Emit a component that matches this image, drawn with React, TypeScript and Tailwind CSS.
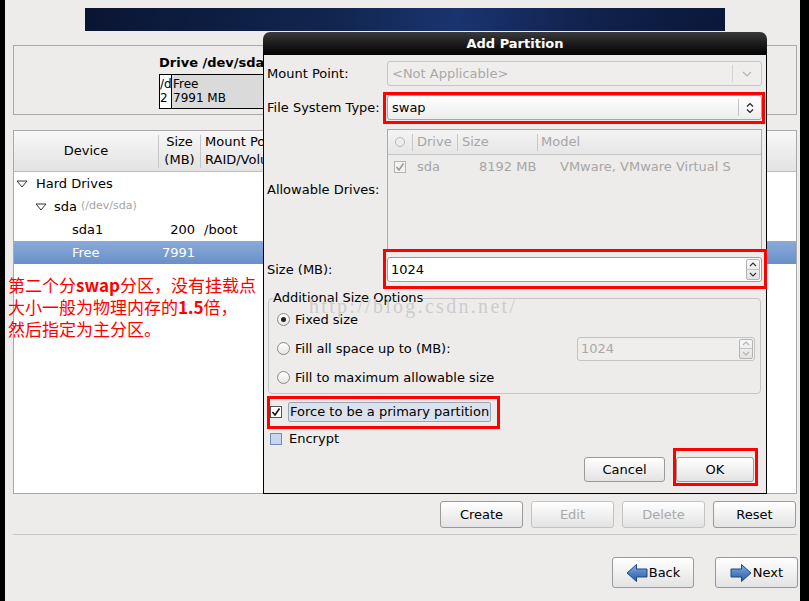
import React from 'react';

const ChevronDown = ({color}: {color: string}) => (
    <svg width="10" height="6" viewBox="0 0 10 6">
        <polyline points="1,1 5,5 9,1" fill="none" stroke={color} strokeWidth="1.2"/>
    </svg>
);

const UpDown = ({color}: {color: string}) => (
    <svg width="8" height="12" viewBox="0 0 8 12">
        <polyline points="1,4.5 4,1.5 7,4.5" fill="none" stroke={color} strokeWidth="1.2"/>
        <polyline points="1,7.5 4,10.5 7,7.5" fill="none" stroke={color} strokeWidth="1.2"/>
    </svg>
);

const Expander = () => (
    <svg width="12" height="8" viewBox="0 0 12 8">
        <polygon points="1,1 11,1 6,7" fill="none" stroke="#333" strokeWidth="1"/>
    </svg>
);

const Check = ({color}: {color: string}) => (
    <svg width="10" height="10" viewBox="0 0 10 10">
        <polyline points="1.5,5 4,8 8.5,1.5" fill="none" stroke={color} strokeWidth="1.6"/>
    </svg>
);

const Arrow = ({dir}: {dir: 'left' | 'right'}) => (
    <svg width="22" height="20" viewBox="0 0 22 20" className={dir === 'right' ? '-scale-x-100' : ''}>
        <defs>
            <linearGradient id={`ag-${dir}`} x1="0" y1="0" x2="0" y2="1">
                <stop offset="0" stopColor="#8ab2e2"/>
                <stop offset="0.5" stopColor="#4f83c6"/>
                <stop offset="1" stopColor="#2c5b9f"/>
            </linearGradient>
        </defs>
        <path d="M1 10 L10.5 1.5 L10.5 6 L21 6 L21 14 L10.5 14 L10.5 18.5 Z" fill={`url(#ag-${dir})`}
              stroke="#1d4780" strokeWidth="1"/>
    </svg>
);

const Radio = ({checked}: {checked?: boolean}) => (
    <div
        className="flex h-[13px] w-[13px] items-center justify-center rounded-full border border-[#8a8a8a] bg-gradient-to-b from-white to-[#e6e6e6]">
        {checked && <div className="h-[5px] w-[5px] rounded-full bg-[#222]"/>}
    </div>
);

function SpinButtons({color}: {color: string}) {
    return (
        <div className="my-[1px] mr-[1px] flex w-[14px] flex-col rounded-[2px] border border-[#b4b4b4] bg-gradient-to-b from-[#f8f8f8] to-[#e2e2e2]">
            <div className="flex flex-1 items-center justify-center border-b border-[#c4c4c4]">
                <svg width="8" height="5" viewBox="0 0 8 5">
                    <polyline points="1,4 4,1 7,4" fill="none" stroke={color} strokeWidth="1.1"/>
                </svg>
            </div>
            <div className="flex flex-1 items-center justify-center">
                <svg width="8" height="5" viewBox="0 0 8 5">
                    <polyline points="1,1 4,4 7,1" fill="none" stroke={color} strokeWidth="1.1"/>
                </svg>
            </div>
        </div>
    );
}

function Button({label, disabled, width}: {label: string; disabled?: boolean; width: string}) {
    return (
        <div
            className={`flex h-full items-center justify-center rounded-[3px] border bg-gradient-to-b from-white to-[#e3e3e3] ${width} ${disabled ? 'border-[#c3c3c3] text-[#a9a9a9]' : 'border-[#9a9a9a] text-black'}`}>
            {label}
        </div>
    );
}

export default function App() {
    return (
        <div
            className="relative flex h-[601px] w-[809px] overflow-hidden bg-black font-['DejaVu_Sans','Liberation_Sans',sans-serif] text-[13px] text-black">
            <div className="w-[5px] shrink-0"/>
            <div className="flex w-[795px] shrink-0 flex-col bg-[#edeceb]">
                {/* Banner */}
                <div
                    className="ml-[80px] mt-[8px] h-[23px] w-[640px] bg-[linear-gradient(100deg,#0a1532_0%,#112650_40%,#1a3470_58%,#10214a_80%,#0b173a_100%)]"/>

                {/* Drive graph */}
                <div className="ml-[8px] mt-[14px] h-[70px] w-[784px] border border-[#a9a9a9] pl-[145px] pt-[9px]">
                    <div className="w-[104px] overflow-hidden whitespace-nowrap font-bold leading-[16px]">Drive /dev/sda (</div>
                    <div className="mt-[3px] flex h-[35px] w-[104px] border-y border-l border-black text-[12px] leading-[14px]">
                        <div className="w-[12px] overflow-hidden whitespace-nowrap border-r border-black bg-white pt-[2px]">
                            <div>/d</div>
                            <div>2</div>
                        </div>
                        <div className="flex-1 bg-[#dadada] pl-[1px] pt-[2px]">
                            <div>Free</div>
                            <div>7991 MB</div>
                        </div>
                    </div>
                </div>

                {/* Partition table */}
                <div className="ml-[8px] mt-[15px] h-[364px] w-[784px] border border-[#a9a9a9] bg-white">
                    <div
                        className="flex h-[41px] items-center border-b border-[#bdbdbd] bg-gradient-to-b from-[#f7f7f7] to-[#e3e3e3] leading-[18px]">
                        <div className="w-[144px] text-center">Device</div>
                        <div className="h-[33px] w-px bg-[#c8c8c8]"/>
                        <div className="w-[41px] text-center">
                            <div>Size</div>
                            <div>(MB)</div>
                        </div>
                        <div className="h-[33px] w-px bg-[#c8c8c8]"/>
                        <div className="w-[62px] overflow-hidden whitespace-nowrap pl-[4px]">
                            <div>Mount Point/</div>
                            <div>RAID/Volume</div>
                        </div>
                    </div>
                    <div className="flex h-[23px] items-center pl-[2px]">
                        <Expander/>
                        <span className="ml-[8px]">Hard Drives</span>
                    </div>
                    <div className="flex h-[23px] items-center pl-[21px]">
                        <Expander/>
                        <span className="ml-[7px]">sda</span>
                        <span className="ml-[4px] text-[11px] text-[#a3a3a3]">(/dev/sda)</span>
                    </div>
                    <div className="flex h-[23px] items-center">
                        <div className="w-[144px] pl-[58px]">sda1</div>
                        <div className="w-[42px] pr-[5px] text-right">200</div>
                        <div className="pl-[4px]">/boot</div>
                    </div>
                    <div
                        className="flex h-[23px] items-center bg-gradient-to-b from-[#8aabda] to-[#6890c7] text-white">
                        <div className="w-[144px] pl-[58px]">Free</div>
                        <div className="w-[42px] pr-[5px] text-right">7991</div>
                    </div>
                </div>

                {/* Action buttons */}
                <div className="mt-[7px] flex h-[27px] justify-end gap-[8px] pr-[4px]">
                    <Button label="Create" width="w-[83px]"/>
                    <Button label="Edit" width="w-[83px]" disabled/>
                    <Button label="Delete" width="w-[83px]" disabled/>
                    <Button label="Reset" width="w-[83px]"/>
                </div>
                <div className="ml-[8px] mt-[6px] h-px w-[784px] bg-[#c6c6c6]"/>
                <div className="mt-[22px] flex h-[31px] justify-end gap-[21px] pr-[2px]">
                    <div
                        className="flex w-[82px] items-center justify-center gap-[1px] rounded-[3px] border border-[#9a9a9a] bg-gradient-to-b from-white to-[#e3e3e3]">
                        <Arrow dir="left"/>
                        <span>Back</span>
                    </div>
                    <div
                        className="flex w-[83px] items-center justify-center gap-[1px] rounded-[3px] border border-[#7d9cc8] bg-gradient-to-b from-white to-[#e3e3e3]">
                        <Arrow dir="right"/>
                        <span>Next</span>
                    </div>
                </div>
            </div>
            <div className="w-[9px] shrink-0"/>

            {/* Annotation */}
            <div
                className="absolute left-[8px] top-[274px] font-['Noto_Sans_CJK_SC',sans-serif] text-[17px] leading-[22px] text-[#ff0000]">
                <div>第二个分<span className="font-bold">swap</span>分区，没有挂载点</div>
                <div>大小一般为物理内存的<span className="font-bold">1.5</span>倍，</div>
                <div>然后指定为主分区。</div>
            </div>

            {/* Add Partition dialog */}
            <div className="absolute left-[263px] top-[32px] flex h-[462px] w-[504px] flex-col">
                <div
                    className="flex h-[23px] items-center justify-center rounded-t-[7px] bg-gradient-to-b from-[#3a3a3a] to-[#040404] font-bold text-white">
                    Add Partition
                </div>
                <div className="flex-1 border-x border-b border-black bg-[#edeceb] pl-[3px] pt-[6px]">
                    {/* Mount point */}
                    <div className="flex h-[25px] items-center">
                        <div className="w-[120px]">Mount Point:</div>
                        <div
                            className="flex h-full w-[375px] items-center rounded-[3px] border border-[#c6c6c6] bg-[#efeeed] pl-[4px] text-[#a9a9a9]">
                            <span>&lt;Not Applicable&gt;</span>
                            <div className="ml-auto flex h-full w-[29px] items-center">
                                <div className="h-[17px] w-px bg-[#d2d2d2]"/>
                                <div className="flex flex-1 justify-center">
                                    <ChevronDown color="#b4b4b4"/>
                                </div>
                            </div>
                        </div>
                    </div>

                    {/* File system type */}
                    <div className="mt-[9px] flex h-[25px] items-center">
                        <div className="w-[120px]">File System Type:</div>
                        <div
                            className="flex h-full w-[375px] items-center rounded-[3px] border border-[#a6a6a6] bg-gradient-to-b from-white to-[#ededed] pl-[4px]">
                            <span>swap</span>
                            <div className="ml-auto flex h-full w-[23px] items-center">
                                <div className="h-[17px] w-px bg-[#c4c4c4]"/>
                                <div className="flex flex-1 justify-center">
                                    <UpDown color="#222"/>
                                </div>
                            </div>
                        </div>
                    </div>

                    {/* Allowable drives */}
                    <div className="mt-[9px] flex h-[123px] items-start">
                        <div className="w-[120px] pt-[51px]">Allowable Drives:</div>
                        <div className="h-full w-[375px] border border-[#ababab] text-[#a6a6a6]">
                            <div
                                className="flex h-[25px] items-center border-b border-[#c6c6c6] bg-gradient-to-b from-[#f4f4f4] to-[#e6e6e6]">
                                <div className="flex w-[24px] justify-center">
                                    <div className="h-[10px] w-[10px] rounded-full border border-[#b8b8b8]"/>
                                </div>
                                <div className="h-[17px] w-px bg-[#c8c8c8]"/>
                                <div className="w-[44px] pl-[4px]">Drive</div>
                                <div className="h-[17px] w-px bg-[#c8c8c8]"/>
                                <div className="w-[79px] pl-[4px]">Size</div>
                                <div className="h-[17px] w-px bg-[#c8c8c8]"/>
                                <div className="pl-[3px]">Model</div>
                            </div>
                            <div className="flex h-[24px] items-center">
                                <div
                                    className="ml-[6px] flex h-[12px] w-[12px] items-center justify-center border border-[#b4b4b4] bg-[#f2f2f2]">
                                    <Check color="#9a9a9a"/>
                                </div>
                                <div className="ml-[11px] w-[62px]">sda</div>
                                <div className="w-[81px]">8192 MB</div>
                                <div>VMware, VMware Virtual S</div>
                            </div>
                        </div>
                    </div>

                    {/* Size */}
                    <div className="mt-[5px] flex h-[25px] items-center">
                        <div className="w-[120px]">Size (MB):</div>
                        <div
                            className="flex h-full w-[375px] items-stretch rounded-[3px] border border-[#9c9c9c] bg-white">
                            <span className="self-center pl-[3px]">1024</span>
                            <div className="ml-auto flex">
                                <SpinButtons color="#333"/>
                            </div>
                        </div>
                    </div>

                    {/* Additional size options */}
                    <div className="relative ml-[1px] mt-[16px] h-[96px] w-[493px] rounded-[4px] border border-[#c6c6c6] pl-[8px] pt-[6px]">
                        <div className="absolute left-[4px] top-[-9px] bg-[#edeceb] leading-[16px]">Additional Size Options</div>
                        <div className="flex h-[29px] items-center gap-[5px]">
                            <Radio checked/>
                            <span>Fixed size</span>
                        </div>
                        <div className="flex h-[29px] items-center gap-[5px]">
                            <Radio/>
                            <span>Fill all space up to (MB):</span>
                            <div
                                className="ml-auto mr-[5px] flex h-[24px] w-[178px] items-stretch rounded-[3px] border border-[#c4c4c4] bg-[#efeeed] text-[#a9a9a9]">
                                <span className="self-center pl-[3px]">1024</span>
                                <div className="ml-auto flex">
                                    <SpinButtons color="#b4b4b4"/>
                                </div>
                            </div>
                        </div>
                        <div className="flex h-[29px] items-center gap-[5px]">
                            <Radio/>
                            <span>Fill to maximum allowable size</span>
                        </div>
                    </div>

                    {/* Primary partition */}
                    <div className="mt-[8px] flex h-[20px] items-center">
                        <div
                            className="ml-[3px] flex h-[12px] w-[12px] items-center justify-center border border-[#555] bg-white">
                            <Check color="#111"/>
                        </div>
                        <div
                            className="ml-[6px] flex h-[20px] items-center whitespace-nowrap rounded-[2px] border border-[#98a6ba] bg-[#dbe2ec] pl-[1px] pr-[1px]">
                            Force to be a primary partition
                        </div>
                    </div>

                    {/* Encrypt */}
                    <div className="mt-[7px] flex h-[20px] items-center">
                        <div className="ml-[3px] h-[12px] w-[12px] border border-[#6d8dbd] bg-[#c6d6ec]"/>
                        <span className="ml-[7px]">Encrypt</span>
                    </div>

                    {/* Dialog buttons */}
                    <div className="mt-[8px] flex h-[25px] justify-end gap-[11px] pr-[12px]">
                        <Button label="Cancel" width="w-[81px]"/>
                        <Button label="OK" width="w-[78px]"/>
                    </div>
                </div>

                {/* Red highlight boxes */}
                <div className="absolute left-[120px] top-[60px] h-[32px] w-[382px] border-[3px] border-[#ff0000]"/>
                <div className="absolute left-[120px] top-[217px] h-[40px] w-[384px] border-[3px] border-[#ff0000]"/>
                <div className="absolute left-[4px] top-[364px] h-[33px] w-[233px] border-[3px] border-[#ff0000]"/>
                <div className="absolute left-[410px] top-[416px] h-[38px] w-[85px] border-[3px] border-[#ff0000]"/>
            </div>

            {/* Watermark */}
            <div
                className="pointer-events-none absolute left-[309px] top-[294px] font-['Liberation_Serif',serif] text-[20px] leading-[24px] tracking-[2.3px] text-[#cdcdcd]">
                http://blog.csdn.net/
            </div>
        </div>
    );
}
